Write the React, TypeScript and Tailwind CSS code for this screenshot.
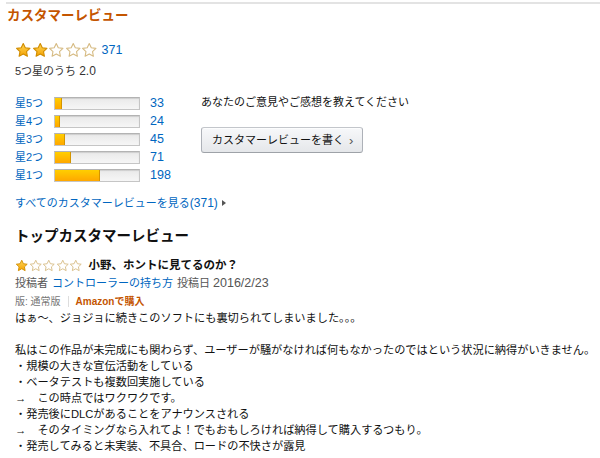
import React from 'react';

const FONT = '"Liberation Sans", Arial, "Noto Sans CJK JP", sans-serif';

const HISTOGRAM = [
  { label: '星5つ', count: 33 },
  { label: '星4つ', count: 24 },
  { label: '星3つ', count: 45 },
  { label: '星2つ', count: 71 },
  { label: '星1つ', count: 198 },
];
const TOTAL = 371;

const BODY_LINES = [
  'はぁ〜、ジョジョに続きこのソフトにも裏切られてしまいました。。。',
  '',
  '私はこの作品が未完成にも関わらず、ユーザーが騒がなければ何もなかったのではという状況に納得がいきません。',
  '・規模の大きな宣伝活動をしている',
  '・ベータテストも複数回実施している',
  '→　この時点ではワクワクです。',
  '・発売後にDLCがあることをアナウンスされる',
  '→　そのタイミングなら入れてよ！でもおもしろければ納得して購入するつもり。',
  '・発売してみると未実装、不具合、ロードの不快さが露見',
];

const STAR_PATH = 'M12 2.2l2.95 6.2 6.75.85-4.95 4.7 1.3 6.75L12 17.35l-6.05 3.35 1.3-6.75-4.95-4.7 6.75-.85z';

function Star({ filled, size, id }: { filled: boolean; size: number; id: string }) {
  return (
    <svg width={size} height={size} viewBox="0 0 24 24" className="shrink-0">
      <defs>
        <linearGradient id={id} x1="0" y1="0" x2="0" y2="1">
          <stop offset="0%" stopColor="#ffd85a" />
          <stop offset="100%" stopColor="#f4a100" />
        </linearGradient>
      </defs>
      <path
        d={STAR_PATH}
        fill={filled ? `url(#${id})` : '#ffffff'}
        stroke={filled ? '#d08c00' : '#d6bb83'}
        strokeWidth={1.6}
        strokeLinejoin="round"
      />
    </svg>
  );
}

function Stars({ rating, size, prefix }: { rating: number; size: number; prefix: string }) {
  return (
    <div className="flex items-center">
      {[0, 1, 2, 3, 4].map((i) => (
        <Star key={i} filled={i < rating} size={size} id={`${prefix}-${i}`} />
      ))}
    </div>
  );
}

function Bar({ count }: { count: number }) {
  const pct = (count / TOTAL) * 100;
  return (
    <div className="relative h-[13px] w-[86px] border border-[#c5c5c5] border-t-[#b3b3b3] bg-gradient-to-b from-[#e9e9e9] to-[#f6f6f6] shadow-[inset_0_1px_1px_rgba(0,0,0,0.12)]">
      <div
        className="absolute left-0 top-0 bottom-0 border-r border-[#d39400] bg-gradient-to-b from-[#ffce00] to-[#ffa700]"
        style={{ width: `${Math.max(pct, 4)}%` }}
      />
    </div>
  );
}

export default function App() {
  return (
    <div className="w-[600px] h-[458px] overflow-hidden bg-white text-[11px] text-[#111]" style={{ fontFamily: FONT }}>
      <div className="ml-[6px] mt-[2px] h-[2px] bg-[#e3e3e3]" />
      <h2 className="pl-[7px] mt-[2px] text-[13.5px] font-bold leading-[20px] text-[#c45500]">カスタマーレビュー</h2>

      <div className="pl-[15px]">
        {/* Summary */}
        <div className="mt-[15px] flex h-[18px] items-center">
          <Stars rating={2} size={16.5} prefix="sum" />
          <span className="ml-[4px] text-[12.5px] text-[#0066c0]">371</span>
        </div>
        <div className="mt-[4px] leading-[16px] text-[#333]">
          5つ星のうち <span className="text-[12px]">2.0</span>
        </div>

        {/* Histogram + write review */}
        <div className="mt-[15px] flex">
          <div className="flex flex-col">
            {HISTOGRAM.map((row) => (
              <div key={row.label} className="flex h-[18px] items-center">
                <span className="w-[39px] text-[#0066c0]">{row.label}</span>
                <Bar count={row.count} />
                <span className="ml-[10px] w-[51px] text-[12.5px] text-[#0066c0]">{row.count}</span>
              </div>
            ))}
          </div>
          <div className="flex flex-col items-start">
            <div className="leading-[16px] text-[#111]">あなたのご意見やご感想を教えてください</div>
            <button className="mt-[17px] flex h-[26px] w-[162px] items-center rounded-[3px] border border-[#adb1b8] border-t-[#c3c6cb] border-b-[#9ea2a8] bg-gradient-to-b from-[#f7f8fa] to-[#e5e7ea] pl-[10px] text-[11px] text-[#111] shadow-[inset_0_1px_0_rgba(255,255,255,0.7)]">
              カスタマーレビューを書く
              <span className="ml-[5px] text-[13px] leading-none text-[#555]">›</span>
            </button>
          </div>
        </div>

        <div className="mt-[11px] flex h-[16px] items-center text-[#0066c0]">
          すべてのカスタマーレビューを見る<span className="text-[12px]">(371)</span>
          <svg width="4" height="6" viewBox="0 0 4 6" className="ml-[4px]">
            <path d="M0 0L4 3L0 6z" fill="#555" />
          </svg>
        </div>

        <h3 className="mt-[15px] text-[14.5px] font-bold leading-[20px] text-[#111]">トップカスタマーレビュー</h3>

        {/* Review */}
        <div className="mt-[12px] flex h-[16px] items-center">
          <Stars rating={1} size={13.5} prefix="rev" />
          <span className="ml-[6px] text-[11.5px] font-bold">小野、ホントに見てるのか？</span>
        </div>
        <div className="flex h-[18px] items-center text-[#555]">
          投稿者
          <span className="ml-[4px] text-[#0066c0]">コントローラーの持ち方</span>
          <span className="ml-[4px]">投稿日 <span className="text-[12.5px]">2016/2/23</span></span>
        </div>
        <div className="flex h-[18px] items-center text-[10px]">
          <span className="text-[#767676]">版: 通常版</span>
          <span className="mx-[7px] h-[11px] w-px bg-[#dddddd]" />
          <span className="font-bold text-[#c45500]">Amazonで購入</span>
        </div>
        <div className="text-[11.2px] leading-[16px] text-[#111]">
          {BODY_LINES.map((line, i) => (
            <div key={i} className="h-[16px] whitespace-nowrap">
              {line}
            </div>
          ))}
        </div>
      </div>
    </div>
  );
}
